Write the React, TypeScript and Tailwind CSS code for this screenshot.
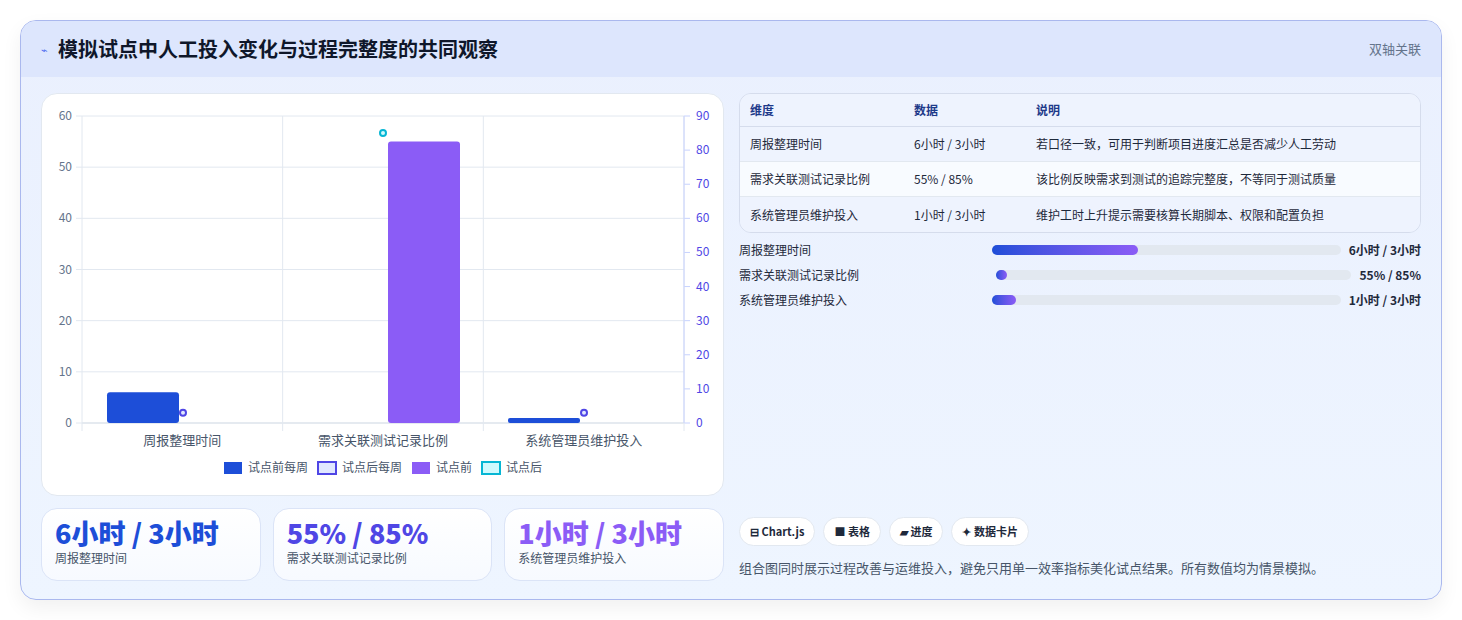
const F = { fontFamily: '"Noto Sans CJK SC", "Noto Sans", sans-serif' };

function Chart() {
  const L = 40, R = 642, T = 22, B = 329;
  const yL = (v: number) => B - (v * (B - T)) / 60;
  const yR = (v: number) => B - (v * (B - T)) / 90;
  const cw = (R - L) / 3;
  const cats = ["周报整理时间", "需求关联测试记录比例", "系统管理员维护投入"];
  return (
    <svg width="683" height="403" style={F}>
      {[0, 10, 20, 30, 40, 50, 60].map((v) => (
        <g key={v}>
          <line x1={L} x2={R} y1={yL(v)} y2={yL(v)} stroke={v === 0 ? "#cbd5e1" : "#e2e8f0"} />
          <line x1={L - 6} x2={L} y1={yL(v)} y2={yL(v)} stroke="#e2e8f0" />
          <text x={L - 10} y={yL(v) + 4} textAnchor="end" fontSize="12" fill="#64748b">{v}</text>
        </g>
      ))}
      {[0, 10, 20, 30, 40, 50, 60, 70, 80, 90].map((v) => (
        <g key={v}>
          <line x1={R} x2={R + 6} y1={yR(v)} y2={yR(v)} stroke="#c7d2fe" />
          <text x={R + 12} y={yR(v) + 4} fontSize="12" fill="#4f46e5">{v}</text>
        </g>
      ))}
      {[0, 1, 2, 3].map((i) => (
        <line key={i} x1={L + cw * i} x2={L + cw * i} y1={T} y2={B + 8} stroke="#e2e8f0" />
      ))}
      <line x1={R} x2={R} y1={T} y2={B} stroke="#c7d2fe" />
      <rect x={65} y={yL(6)} width={72} height={B - yL(6)} rx={3} fill="#1d4ed8" />
      <rect x={346} y={yL(55)} width={72} height={B - yL(55)} rx={3} fill="#8b5cf6" />
      <rect x={466} y={yL(1)} width={72} height={B - yL(1)} rx={2} fill="#1d4ed8" />
      <circle cx={141} cy={yR(3)} r={3} fill="#e0e7ff" stroke="#4f46e5" strokeWidth={2} />
      <circle cx={341} cy={yR(85)} r={3} fill="#cffafe" stroke="#06b6d4" strokeWidth={2} />
      <circle cx={542} cy={yR(3)} r={3} fill="#e0e7ff" stroke="#4f46e5" strokeWidth={2} />
      {cats.map((c, i) => (
        <text key={c} x={L + cw * i + cw / 2} y={351} textAnchor="middle" fontSize="13" fill="#475569">{c}</text>
      ))}
      <g fontSize="12" fill="#475569">
        <rect x={182} y={368} width={18} height={12} fill="#1d4ed8" />
        <text x={206} y={378}>试点前每周</text>
        <rect x={276} y={368} width={18} height={12} fill="#e0e7ff" stroke="#4f46e5" strokeWidth={2} />
        <text x={300} y={378}>试点后每周</text>
        <rect x={370} y={368} width={18} height={12} fill="#8b5cf6" />
        <text x={394} y={378}>试点前</text>
        <rect x={440} y={368} width={18} height={12} fill="#cffafe" stroke="#06b6d4" strokeWidth={2} />
        <text x={464} y={378}>试点后</text>
      </g>
    </svg>
  );
}

const rows = [
  ["周报整理时间", "6小时 / 3小时", "若口径一致，可用于判断项目进度汇总是否减少人工劳动"],
  ["需求关联测试记录比例", "55% / 85%", "该比例反映需求到测试的追踪完整度，不等同于测试质量"],
  ["系统管理员维护投入", "1小时 / 3小时", "维护工时上升提示需要核算长期脚本、权限和配置负担"],
];

export default function App() {
  return (
    <div className="min-h-[620px] bg-white p-5" style={F}>
      <div className="overflow-hidden rounded-2xl border border-[#aab8ee] bg-gradient-to-b from-[#eaf0fe] to-[#eef5ff] shadow-[0_8px_20px_rgba(0,0,0,0.06)]">
        <div className="flex h-[56px] items-center justify-between bg-[#dde6fd] px-5">
          <div className="flex items-center gap-[10px]">
            <span className="text-[11px] text-[#4f6cf0]">⌁</span>
            <span className="text-[20px] font-bold text-[#0f172a]">模拟试点中人工投入变化与过程完整度的共同观察</span>
          </div>
          <span className="text-[13px] text-[#64748b]">双轴关联</span>
        </div>
        <div className="flex gap-[15px] px-5 pb-[18px] pt-[16px]">
          <div className="flex w-[683px] flex-col gap-3">
            <div className="h-[403px] rounded-2xl border border-[#e2e8f0] bg-white">
              <Chart />
            </div>
            <div className="grid grid-cols-3 gap-3">
              {[
                ["6小时 / 3小时", "周报整理时间", "text-[#1d4ed8]"],
                ["55% / 85%", "需求关联测试记录比例", "text-[#4f46e5]"],
                ["1小时 / 3小时", "系统管理员维护投入", "text-[#8b5cf6]"],
              ].map(([v, l, c]) => (
                <div key={l} className="h-[73px] rounded-2xl border border-[#dbe4f7] bg-gradient-to-b from-white to-[#f7faff] px-[13px] pt-[8px]">
                  <div className={`text-[27px] font-extrabold leading-[32px] ${c}`}>{v}</div>
                  <div className="text-[12px] text-[#475569]">{l}</div>
                </div>
              ))}
            </div>
          </div>
          <div className="flex flex-1 flex-col">
            <div className="overflow-hidden rounded-xl border border-[#d5dcec] text-[12px]">
              <div className="flex h-[33px] items-center border-b border-[#d5dcec] bg-[#eef3fe] px-[10px] font-semibold text-[#1e3a8a]">
                <span className="w-[164px]">维度</span><span className="w-[122px]">数据</span><span>说明</span>
              </div>
              {rows.map((r, i) => (
                <div key={r[0]} className={`flex h-[35px] items-center px-[10px] text-[#1e293b] ${i === 1 ? "bg-[#f8fbff]" : "bg-[#eef3fe]"} ${i < 2 ? "border-b border-[#e2e8f0]" : ""}`}>
                  <span className="w-[164px]">{r[0]}</span><span className="w-[122px]">{r[1]}</span><span>{r[2]}</span>
                </div>
              ))}
            </div>
            <div className="mt-[9px] flex flex-col gap-[9px] text-[12px] text-[#1e293b]">
              {[
                ["周报整理时间", "6小时 / 3小时", "w-[42%]", "ml-0"],
                ["需求关联测试记录比例", "55% / 85%", "w-[3%]", "ml-[4px]"],
                ["系统管理员维护投入", "1小时 / 3小时", "w-[7%]", "ml-0"],
              ].map(([l, v, w, m]) => (
                <div key={l} className="flex h-[16px] items-center">
                  <span className="w-[253px]">{l}</span>
                  <div className={`h-[10px] flex-1 rounded-full bg-[#e2e8f0] ${m}`}>
                    <div className={`h-full rounded-full bg-gradient-to-r from-[#1d4ed8] to-[#8b5cf6] ${w}`} />
                  </div>
                  <span className="ml-2 font-bold">{v}</span>
                </div>
              ))}
            </div>
            <div className="mt-auto flex gap-2 text-[11px] font-semibold text-[#1e293b]">
              {["⊟ Chart.js", "■ 表格", "▰ 进度", "✦ 数据卡片"].map((t) => (
                <span key={t} className="rounded-full border border-[#e2e8f0] bg-white px-[10px] py-[5px]">{t}</span>
              ))}
            </div>
            <div className="mb-[4px] mt-[12px] text-[13px] text-[#475569]">组合图同时展示过程改善与运维投入，避免只用单一效率指标美化试点结果。所有数值均为情景模拟。</div>
          </div>
        </div>
      </div>
    </div>
  );
}
